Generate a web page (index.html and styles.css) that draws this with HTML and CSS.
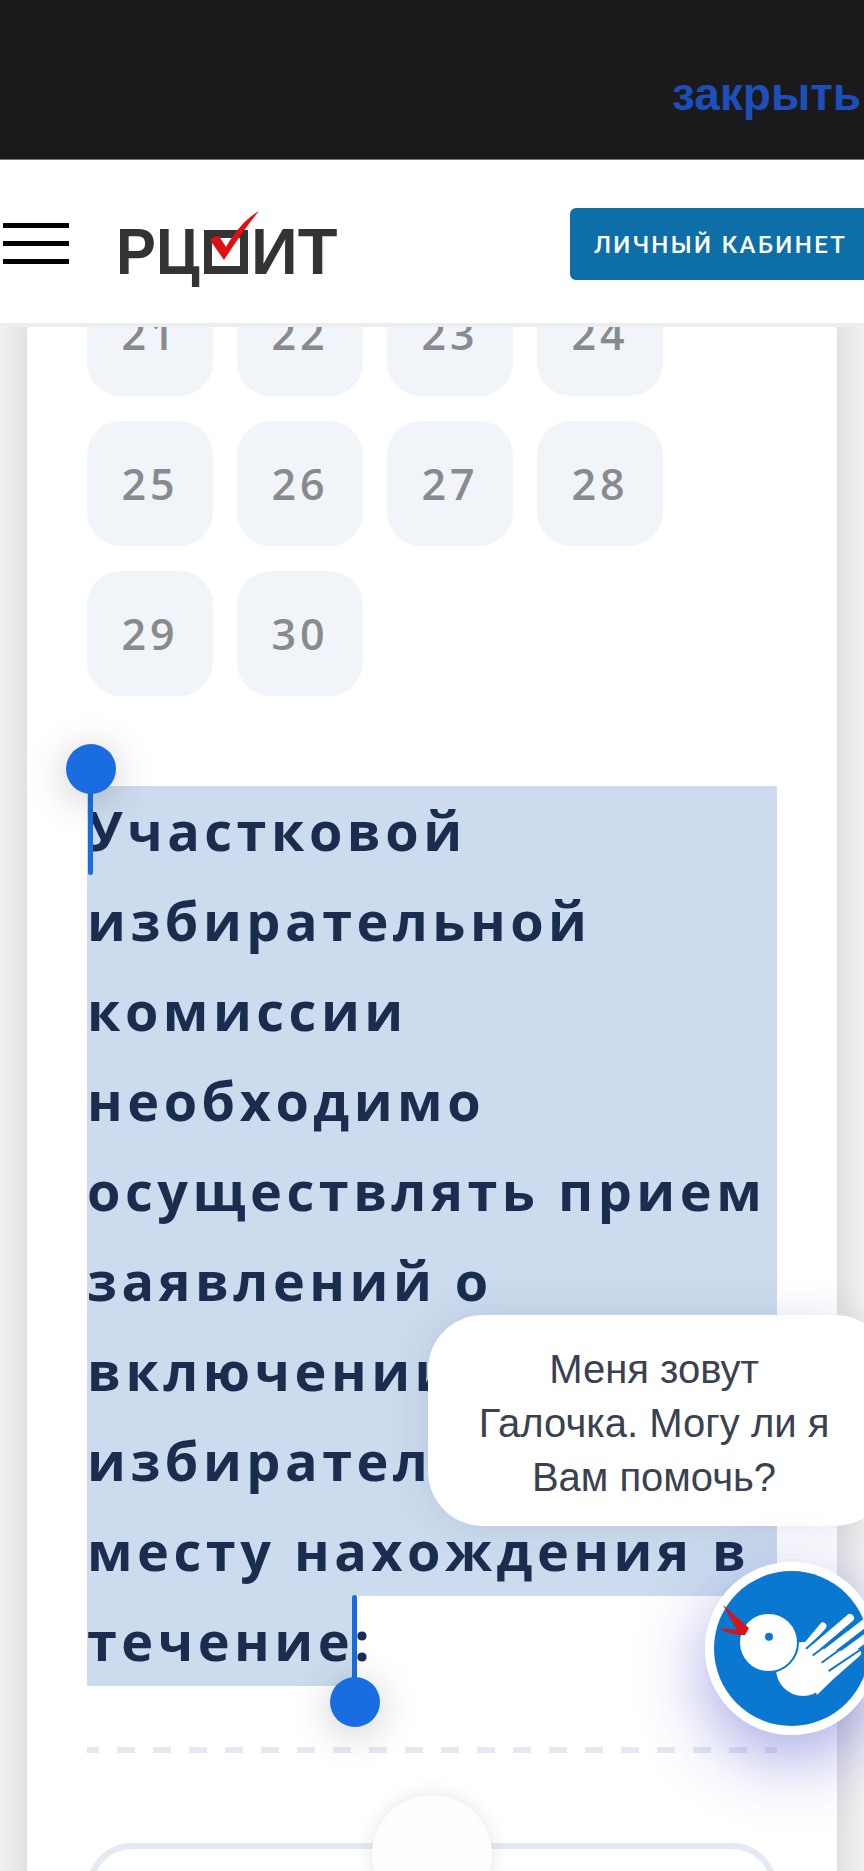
FILE: index.html
```html
<!DOCTYPE html>
<html lang="ru">
<head>
    <meta charset="UTF-8">
    <meta name="viewport" content="width=device-width, initial-scale=1.0">
    <title>РЦОИТ</title>
    <link rel="stylesheet" href="styles.css">
</head>
<body>
    <div class="top-bar">
        <a class="close-link">закрыть</a>
    </div>
    <header class="site-header">
        <div class="burger"><span></span><span></span><span></span></div>
        <div class="logo">
            <span class="logo-text logo-left">РЦ</span>
            <span class="logo-box"></span>
            <span class="logo-text logo-right">ИТ</span>
            <svg class="logo-check" viewBox="0 0 60 60" width="60" height="60">
                <path d="M5 35 Q8 31 14 31 L21 42 C31 25 42 13 54 6 C43 19 30 38 19 55 Z"></path>
            </svg>
        </div>
        <a class="cabinet-btn">ЛИЧНЫЙ КАБИНЕТ</a>
    </header>
    <main class="card">
        <div class="days">
            <div class="day">21</div>
            <div class="day">22</div>
            <div class="day">23</div>
            <div class="day">24</div>
            <div class="day">25</div>
            <div class="day">26</div>
            <div class="day">27</div>
            <div class="day">28</div>
            <div class="day">29</div>
            <div class="day">30</div>
        </div>
        <div class="question">
            <div class="line">Участковой</div>
            <div class="line">избирательной</div>
            <div class="line">комиссии</div>
            <div class="line">необходимо</div>
            <div class="line">осуществлять прием</div>
            <div class="line">заявлений о</div>
            <div class="line">включении</div>
            <div class="line">избирателей</div>
            <div class="line">месту нахождения в</div>
            <div class="line-last"><span class="line selected">течение</span>:</div>
            <div class="handle handle-start"></div>
            <div class="handle handle-end"></div>
        </div>
        <div class="dashes"></div>
        <div class="answer-box">
            <div class="answer-knob"></div>
        </div>
    </main>
    <div class="bubble">Меня зовут<br>Галочка. Могу ли я<br>Вам помочь?</div>
    <div class="bot">
        <svg viewBox="0 0 173 173" width="173" height="173">
            <circle class="bot-ring" cx="86.5" cy="86.5" r="86.5"></circle>
            <circle class="bot-disc" cx="86.5" cy="86.5" r="77.5"></circle>
            <circle class="bot-white" cx="98" cy="107" r="27"></circle>
            <path class="bot-white" d="M93 84 L155 91 L112 133 Z"></path>
            <line class="bot-finger thumb" x1="98" y1="88" x2="118" y2="64"></line>
            <line class="bot-finger" x1="105" y1="90" x2="145" y2="56"></line>
            <line class="bot-finger" x1="113" y1="97" x2="160" y2="61"></line>
            <line class="bot-finger" x1="121" y1="105" x2="162" y2="75"></line>
            <line class="bot-finger" x1="128" y1="112" x2="152" y2="91"></line>
            <line class="bot-gap" x1="101.7" y1="86.3" x2="124" y2="66"></line>
            <line class="bot-gap" x1="108.3" y1="93" x2="150" y2="62"></line>
            <line class="bot-gap" x1="117.3" y1="100.3" x2="159" y2="70"></line>
            <line class="bot-gap" x1="124.3" y1="108.7" x2="155" y2="88"></line>
            <circle class="bot-head" cx="63.5" cy="80.5" r="29.5"></circle>
            <circle class="bot-eye" cx="64" cy="74.7" r="4"></circle>
            <path class="bot-beak" d="M18 43 L44 66 L40 73 C32 73 22 72 14 66 L32 68 Z"></path>
        </svg>
    </div>
</body>
</html>
```

FILE: styles.css
```css
* {
    box-sizing: border-box;
}
html, body {
    height: 1871px;
}
body {
    margin: 0;
    overflow: hidden;
    background: #fff;
    font-family: 'Open Sans', sans-serif;
    position: relative;
}
.top-bar {
    height: 160px;
    background: #1a1a1c;
    border-bottom: 1px solid #77777a;
    display: flex;
    justify-content: flex-end;
    padding: 71px 3px 0 0;
}
.close-link {
    color: #1c4fb8;
    font-family: 'Liberation Sans', sans-serif;
    font-weight: 700;
    font-size: 46px;
    line-height: 46px;
}
.site-header {
    position: relative;
    z-index: 2;
    height: 167px;
    background: #fff;
    border-bottom: 4px solid #ededee;
    display: flex;
    align-items: center;
    padding: 4px 0 0 3px;
}
.burger {
    width: 66px;
    display: flex;
    flex-direction: column;
    gap: 12.5px;
}
.burger span {
    height: 5.5px;
    background: #000;
}
.logo {
    position: relative;
    display: flex;
    height: 45px;
    margin: 16px 0 0 47px;
}
.logo-text {
    font-family: 'Liberation Sans', sans-serif;
    font-weight: 700;
    font-size: 65px;
    line-height: 45px;
    color: #333;
    white-space: nowrap;
    transform-origin: left center;
}
.logo-left {
    width: 84px;
    transform: scaleX(0.92);
}
.logo-right {
    width: 87px;
}
.logo-box {
    width: 44px;
    height: 44px;
    margin: 1px 3px 0 4px;
    border: 8px solid #333;
}
.logo-check {
    position: absolute;
    left: 89px;
    top: -24px;
    fill: #e01010;
}
.cabinet-btn {
    margin-left: auto;
    width: 294px;
    height: 72px;
    border-radius: 6px 0 0 6px;
    background: #0d6ea8;
    color: #fff;
    font-family: 'Roboto', sans-serif;
    font-weight: 500;
    font-size: 24px;
    letter-spacing: 2.4px;
    line-height: 74px;
    padding-left: 24px;
    white-space: nowrap;
}
.card {
    width: 810px;
    margin: -56px 0 0 27px;
    padding: 0 60px;
    height: 1700px;
    background: #fff;
    box-shadow: 0 0 60px 8px rgba(0, 0, 0, 0.2);
}
.days {
    display: grid;
    grid-template-columns: repeat(4, 126px);
    grid-auto-rows: 125px;
    gap: 25px 24px;
}
.day {
    background: #f1f4f9;
    border-radius: 34px;
    display: flex;
    align-items: center;
    justify-content: center;
    color: #888b8e;
    font-weight: 600;
    font-size: 43px;
    letter-spacing: 4px;
}
.question {
    position: relative;
    margin-top: 90px;
    color: #1a2d4f;
    font-weight: 700;
    font-size: 54px;
    letter-spacing: 4.5px;
    line-height: 90px;
    white-space: nowrap;
}
.line {
    background: #ccdcee;
    line-height: 88px;
    padding-bottom: 2px;
}
.line-last {
    line-height: 88px;
}
.selected {
    display: inline-block;
}
.handle {
    position: absolute;
    width: 5px;
    background: #1a6de0;
    border-radius: 3px;
}
.handle::after {
    content: "";
    position: absolute;
    left: -22.5px;
    width: 50px;
    height: 50px;
    border-radius: 50%;
    background: #1a6de0;
    box-shadow: 0 6px 40px rgba(0, 0, 0, 0.22);
}
.handle-start {
    left: 1px;
    top: -17px;
    height: 106px;
}
.handle-start::after {
    top: -25px;
}
.handle-end {
    left: 265px;
    top: 809px;
    height: 90px;
}
.handle-end::after {
    top: 82px;
}
.dashes {
    margin-top: 61px;
    height: 6px;
    background-image: linear-gradient(90deg, #e4e9f2 18px, transparent 18px);
    background-size: 36px 6px;
    background-position: 30px 0;
}
.answer-box {
    position: relative;
    margin-top: 90px;
    height: 200px;
    border: 6px solid #e4eaf3;
    border-radius: 45px;
}
.answer-knob {
    position: absolute;
    left: 279px;
    top: -54px;
    width: 120px;
    height: 120px;
    border-radius: 50%;
    background: #fdfdfd;
    box-shadow: 0 0 20px rgba(0, 0, 0, 0.1);
}
.bubble {
    position: absolute;
    z-index: 3;
    left: 428px;
    top: 1315px;
    width: 462px;
    height: 211px;
    padding: 27px 10px 0 0;
    border-radius: 55px;
    background: #fff;
    color: #3a4150;
    font-family: 'Liberation Sans', sans-serif;
    font-size: 40px;
    line-height: 54px;
    text-align: center;
    box-shadow: 0 0 40px rgba(40, 50, 110, 0.12);
}
.bot {
    position: absolute;
    z-index: 4;
    left: 705px;
    top: 1562px;
    width: 173px;
    height: 173px;
    border-radius: 50%;
    box-shadow: 0 24px 70px rgba(60, 60, 200, 0.45);
}
.bot svg {
    display: block;
}
.bot-ring {
    fill: #fff;
}
.bot-disc {
    fill: #0a78d0;
}
.bot-white {
    fill: #fff;
}
.bot-finger {
    stroke: #fff;
    stroke-width: 8px;
    stroke-linecap: round;
}
.thumb {
    stroke-width: 7px;
}
.bot-gap {
    stroke: #0a78d0;
    stroke-width: 2px;
    stroke-linecap: round;
}
.bot-head {
    fill: #fff;
    stroke: #0a78d0;
    stroke-width: 2px;
}
.bot-eye {
    fill: #0a78d0;
}
.bot-beak {
    fill: #d2161e;
}
```
